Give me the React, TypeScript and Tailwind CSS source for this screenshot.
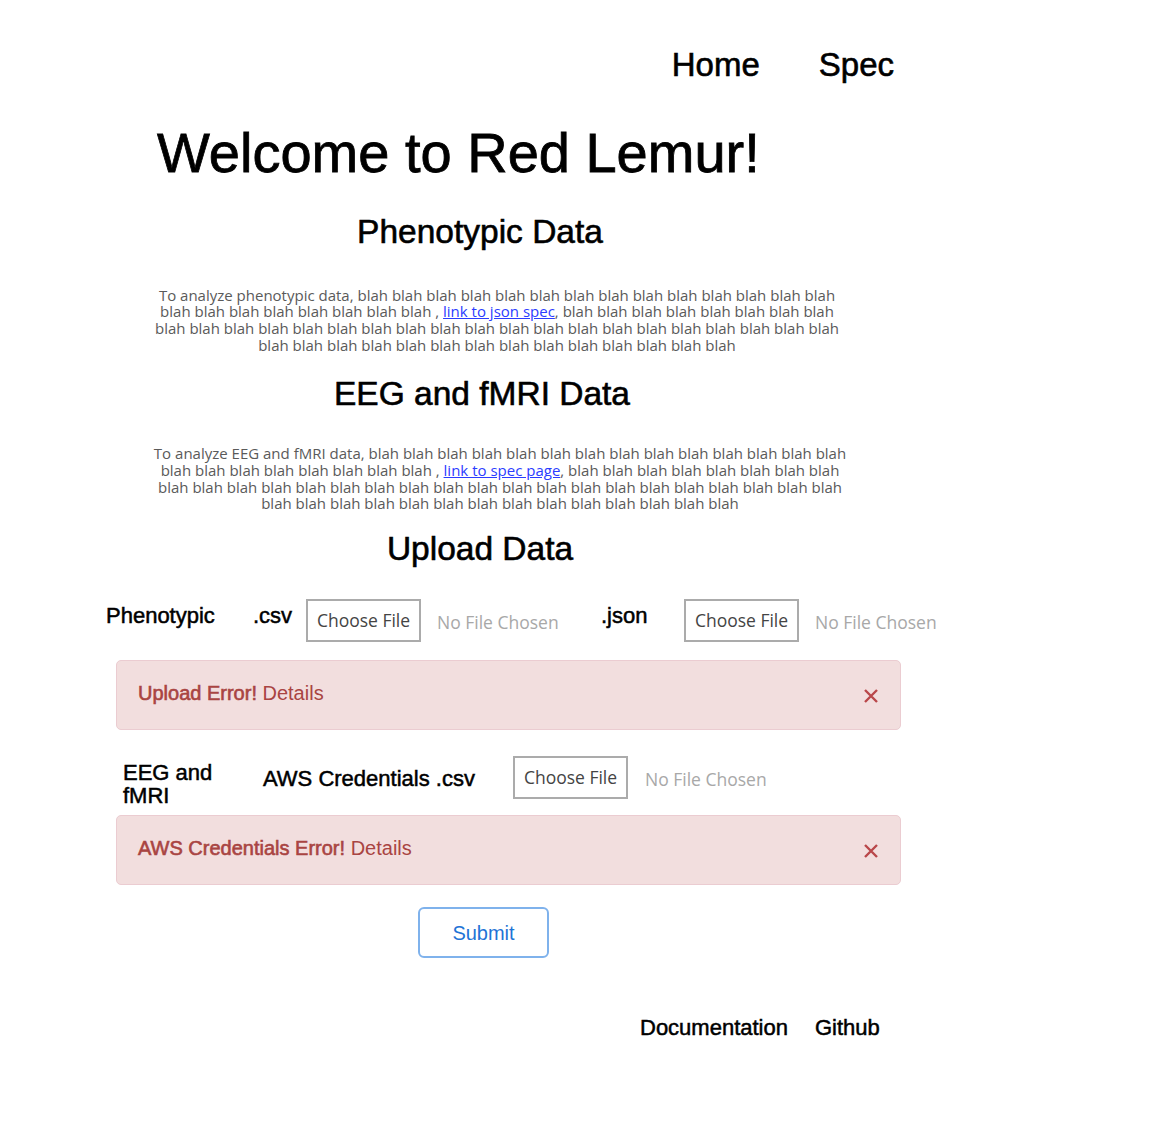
import React from "react";

const blah = (n: number) => Array(n).fill("blah").join(" ");

function FileBox() {
  return (
    <div className="flex h-[43px] w-[115px] shrink-0 items-center justify-center border-2 border-[#ababab] bg-white font-['Open_Sans',sans-serif] text-[17.5px] leading-none text-[#444]">
      Choose File
    </div>
  );
}

function NoFile({ w }: { w?: string }) {
  return (
    <div className={`mt-[15px] shrink-0 font-['Open_Sans',sans-serif] text-[17.5px] leading-none text-[#a8a8a8] ${w ?? ""}`}>
      No File Chosen
    </div>
  );
}

function ErrorBox({ title }: { title: string }) {
  return (
    <div className="ml-[116px] flex h-[70px] w-[785px] items-start justify-between rounded-[5px] border border-[#ebccd1] bg-[#f2dede] pl-[21px] pr-[21px] pt-[22px] text-[20px] leading-none text-[#a94442]">
      <div>
        <span className="[-webkit-text-stroke:0.6px_#a94442]">{title}</span> Details
      </div>
      <svg width="16" height="16" viewBox="0 0 16 16" className="mt-[5px]">
        <path d="M2 2 L14 14 M14 2 L2 14" stroke="#b9474a" strokeWidth="2.4" strokeLinecap="butt" />
      </svg>
    </div>
  );
}

export default function App() {
  return (
    <div className="min-h-[1136px] w-[1176px] bg-white font-['Liberation_Sans',Arial,sans-serif] text-black">
      <nav className="flex justify-end gap-[59px] pr-[282px] pt-[48px] text-[33px] leading-none [-webkit-text-stroke:0.6px_black]">
        <a>Home</a>
        <a>Spec</a>
      </nav>

      <h1 className="mt-[44px] pl-[157px] text-[56px] leading-none [-webkit-text-stroke:0.8px_black]">Welcome to Red Lemur!</h1>

      <h2 className="mt-[34px] w-[960px] text-center text-[33.5px] leading-none [-webkit-text-stroke:0.6px_black]">Phenotypic Data</h2>

      <p className="ml-[147px] mt-[38px] w-[700px] whitespace-nowrap text-center font-['Open_Sans',sans-serif] text-[15px] leading-[16.7px] text-[#5a5a5a]">
        To analyze phenotypic data, {blah(14)}
        <br />
        {blah(8)} , <a className="text-[#2b3cff] underline">link to json spec</a>, {blah(8)}
        <br />
        {blah(20)}
        <br />
        {blah(14)}
      </p>

      <h2 className="mt-[24px] w-[964px] text-center text-[33.5px] leading-none [-webkit-text-stroke:0.6px_black]">EEG and fMRI Data</h2>

      <p className="ml-[150px] mt-[34.5px] w-[700px] whitespace-nowrap text-center font-['Open_Sans',sans-serif] text-[15px] leading-[16.7px] text-[#5a5a5a]">
        To analyze EEG and fMRI data, {blah(14)}
        <br />
        {blah(8)} , <a className="text-[#2b3cff] underline">link to spec page</a>, {blah(8)}
        <br />
        {blah(20)}
        <br />
        {blah(14)}
      </p>

      <h2 className="mt-[20px] w-[960px] text-center text-[33.5px] leading-none [-webkit-text-stroke:0.6px_black]">Upload Data</h2>

      <div className="mt-[33.5px] flex h-[43px] items-start pl-[106px]">
        <div className="mt-[6px] w-[147px] shrink-0 text-[22px] leading-none [-webkit-text-stroke:0.5px_black]">Phenotypic</div>
        <div className="mt-[6px] w-[53px] shrink-0 text-[22px] leading-none [-webkit-text-stroke:0.5px_black]">.csv</div>
        <FileBox />
        <div className="w-[16px] shrink-0" />
        <NoFile w="w-[164px]" />
        <div className="mt-[6px] w-[83px] shrink-0 text-[22px] leading-none [-webkit-text-stroke:0.5px_black]">.json</div>
        <FileBox />
        <div className="w-[16px] shrink-0" />
        <NoFile />
      </div>

      <div className="mt-[18px]">
        <ErrorBox title="Upload Error!" />
      </div>

      <div className="mt-[26px] flex h-[43px] items-start pl-[123px]">
        <div className="mt-[4.5px] w-[140px] shrink-0 text-[22px] leading-[23px] [-webkit-text-stroke:0.5px_black]">
          EEG and
          <br />
          fMRI
        </div>
        <div className="mt-[12px] w-[250px] shrink-0 text-[22px] leading-none [-webkit-text-stroke:0.5px_black]">AWS Credentials .csv</div>
        <FileBox />
        <div className="w-[17px] shrink-0" />
        <NoFile />
      </div>

      <div className="mt-[16px]">
        <ErrorBox title="AWS Credentials Error!" />
      </div>

      <div className="mt-[22px] pl-[418px]">
        <button className="flex h-[51px] w-[131px] items-center justify-center rounded-[6px] border-2 border-[#7fb2ec] bg-white text-[20px] leading-none text-[#1f74d6]">
          Submit
        </button>
      </div>

      <footer className="mt-[59px] flex gap-[27px] pl-[640px] text-[22px] leading-none [-webkit-text-stroke:0.5px_black]">
        <a>Documentation</a>
        <a>Github</a>
      </footer>
    </div>
  );
}
